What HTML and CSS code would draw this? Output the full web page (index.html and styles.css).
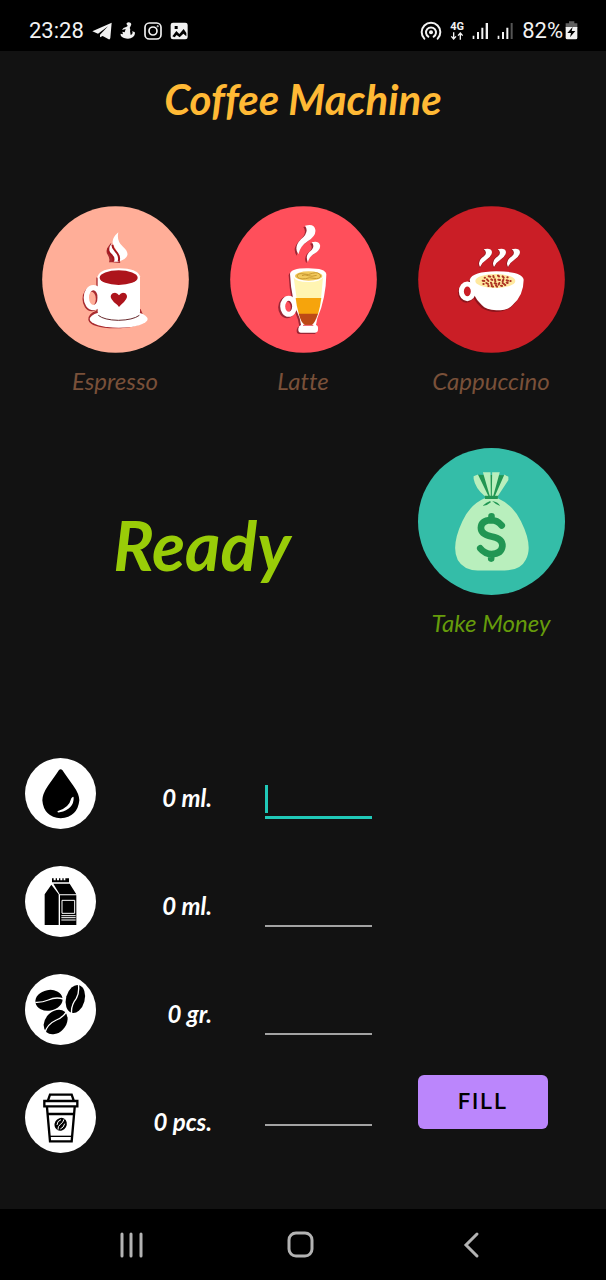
FILE: index.html
```html
<!DOCTYPE html>
<html lang="en">
<head>
<meta charset="utf-8">
<meta name="viewport" content="width=device-width, initial-scale=1">
<title>Coffee Machine</title>
<link rel="stylesheet" href="styles.css">
</head>
<body>
<header class="status-bar">
  <div class="status-group">
    <span class="status-text">23:28</span>
    <svg class="icon-telegram" viewBox="274 66 60 54" aria-hidden="true"><path fill="#f2f2f2" d="M333 68 275 94l17 7 30-22-24 25v8l8-4 18 10q4 1 5-4z"/></svg>
    <svg class="icon-figure" viewBox="360 66 48 54" aria-hidden="true"><path fill="#f2f2f2" d="M379 71q5-6 12-3 5 4 1 10l-3 6q3 4 1 9l2 12q5-1 6-7l-2-4 8 2q3 9-5 15-11 9-27 3-12-4-10-13l7 2-2-8 7 2 3-10-11 3q3-7 12-9 4-1 5-4z"/></svg>
    <svg class="icon-square" viewBox="435 65 54 54" fill="none" stroke="#f2f2f2" stroke-width="5" aria-hidden="true"><rect x="438" y="68" width="48" height="48" rx="13"/><circle cx="462" cy="92" r="12"/><circle cx="476" cy="78" r="1" stroke-width="4"/></svg>
    <svg class="icon-square" viewBox="514 65 54 54" aria-hidden="true"><rect x="516" y="67" width="51" height="50" rx="7" fill="#f2f2f2"/><path d="M528 77h9v9h-9zM521 108l12-16 9 9 13-15 8 12v10l-9-8-11 11-9-7-6 7z"/></svg>
  </div>
  <div class="status-group status-right">
    <svg class="icon-hotspot" viewBox="348 60 66 60" fill="none" stroke="#f2f2f2" stroke-width="6" stroke-linecap="round" aria-hidden="true"><circle cx="381" cy="94" r="6" fill="#f2f2f2" stroke="none"/><path d="M373 107a15 15 0 1 1 16 0M361 113a28 28 0 1 1 40 0"/></svg>
    <span class="network"><span>4G</span><svg viewBox="445 94 42 24" fill="none" stroke="#f2f2f2" stroke-width="4" aria-hidden="true"><path d="M456 95v19m-7-7 7 8 7-8M476 117V98m-7 7 7-8 7 8"/></svg></span>
    <svg class="icon-signal" viewBox="511 63 51 54" fill="#f2f2f2" aria-hidden="true"><path d="M513 104h5v10h-5zM526 93h6v21h-6zM539 80h6v34h-6zM552 66h7v48h-7z"/></svg>
    <svg class="icon-signal" viewBox="582 63 51 54" fill="#f2f2f2" aria-hidden="true"><path d="M584 104h5v10h-5zM597 93h6v21h-6zM610 80h6v34h-6z"/><path fill="#555" d="M623 66h6v48h-6z"/></svg>
    <span class="battery"><span class="status-text">82%</span>
    <svg viewBox="785 62 39 57" aria-hidden="true"><path fill="#5f5f5f" d="M797 63h16v6h9v14h-35V69h10z"/><path fill="#f2f2f2" d="M787 80h35v32q0 5-5 5h-25q-5 0-5-5z"/><path d="m808 80-16 18h11l-3 13 16-19h-11z"/></svg></span>
  </div>
</header>

<main class="machine">
  <h1 class="title">Coffee Machine</h1>

  <section class="drinks" aria-label="Drinks">
    <button class="tile" type="button">
      <svg class="disc" viewBox="36 33 441 441" aria-hidden="true">
        <circle cx="256.500" cy="253.500" r="220" fill="#ffae98"/>
        <ellipse cx="185" cy="312" rx="20" ry="29" fill="none" stroke="#a82b30" stroke-width="15"/>
        <path fill="#a82b30" d="M199 247v100q-25 8-24 28 7 24 81 25 65-1 91-22l-15-35zM243 144q-20 22-10 35 8 12 4 23h9l25 2-12-34z"/>
        <ellipse cx="190" cy="308" rx="21" ry="30" fill="none" stroke="#fff" stroke-width="16"/>
        <ellipse cx="266" cy="372" rx="87" ry="26" fill="#fff"/>
        <path fill="#fff" d="M203 244q8-24 64-24 55 0 63 24v107q-2 23-64 25-57-1-63-25z"/>
        <path d="M205 361q17 14 60 15 44-1 63-15" fill="none" stroke="#67282b" stroke-width="3"/>
        <ellipse cx="266" cy="248" rx="57" ry="22" fill="#ad141c"/>
        <path fill="#ad141c" d="M267 336q-5-7-15-14-18-18-4-27 11-6 19 6 8-12 19-6 12 9-4 26-9 8-15 15z"/>
        <path fill="#fff" d="M265 112q-22 19-16 36 7 13 15 27 4 10-1 25 26-6 29-19 3-12-13-26-20-17-14-43z"/>
        <path fill="#fff" d="M246 145q-15 16-5 28 12 13 8 27h14q9-15-3-28-14-13-14-27z"/>
        <path d="M247 149q0 10 10 20 14 14 9 30M236 160q-5 9 6 18 12 10 7 22" fill="none" stroke="#a4161d" stroke-width="6"/>
      </svg>
      <span class="caption">Espresso</span>
    </button>
    <button class="tile" type="button">
      <svg class="disc" viewBox="45 33 441 441" aria-hidden="true">
        <circle cx="265.500" cy="253.500" r="220" fill="#ff4f5b"/>
        <g fill="#9b2634" transform="translate(-5 4)"><path d="M270 92q28-8 31 12 3 18-23 35-22 14-28 39-15-22 8-45 26-22 12-41zM290 142q20-6 25 8 3 13-17 26-16 10-19 25-9-17 4-30 20-16 7-29z"/><path d="M226 237q2-18 56-17 50 0 52 18-1 73-27 132l-4 20q7 1 6 13 0 10-8 10h-43q-9 0-8-12 1-9 8-11l-4-20q-24-53-28-133z"/></g>
        <ellipse cx="216" cy="337" rx="19" ry="25" fill="none" stroke="#9b2634" stroke-width="15"/>
        <ellipse cx="221" cy="334" rx="18" ry="24" fill="none" stroke="#fff" stroke-width="15"/>
        <path fill="#fff" d="M270 92q28-8 31 12 3 18-23 35-22 14-28 39-15-22 8-45 26-22 12-41zM290 142q20-6 25 8 3 13-17 26-16 10-19 25-9-17 4-30 20-16 7-29z"/>
        <path fill="#fff" d="M225 237q2-18 56-17 51 0 53 18-1 73-27 132l-4 20q7 1 6 13 0 10-8 10h-43q-9 0-8-12 1-9 8-11l-4-20q-25-53-29-133z"/>
        <path fill="#fff5b2" d="M236 247q5 14 45 14 37 0 43-14l-6 64h-73z"/>
        <path fill="#f6a40c" d="M242 309h77q-3 25-10 49h-57q-8-26-10-49z"/>
        <path fill="#bd4916" d="M251 356h58q-8 25-18 34h-22q-12-10-18-34z"/>
        <path d="M264 391h31" stroke="#eb5260" stroke-width="3"/>
        <ellipse cx="281" cy="243" rx="41" ry="14" fill="#f2c95b"/>
        <path d="M246 243q2-10 21-6 14 4 25-2 20-6 25 8-3 10-20 7-15-4-25 1-23 3-26-8m15-1q8-5 19 0 10 4 25-1" fill="none" stroke="#c99932" stroke-width="3"/>
      </svg>
      <span class="caption">Latte</span>
    </button>
    <button class="tile" type="button">
      <svg class="disc" viewBox="52 33 441 441" aria-hidden="true">
        <circle cx="272.500" cy="253.500" r="220" fill="#ca1e26"/>
        <g fill="#8d151c" transform="translate(-3 5)"><path d="M207 254q8-24 80-25 78 0 82 25-1 51-38 80-43 24-85 0-33-27-39-80z"/></g>
        <ellipse cx="197" cy="293" rx="18" ry="23" fill="none" stroke="#8d151c" stroke-width="14"/>
        <ellipse cx="200" cy="289" rx="18" ry="22" fill="#ca1e26" stroke="#fff" stroke-width="15"/>
        <path fill="#fff" d="M207 254q8-24 80-25 78 0 82 25 0 47-34 77-12 15-48 15-32-2-43-15-31-28-37-77z"/>
        <ellipse cx="284" cy="258" rx="60" ry="21" fill="#ffe9a0"/>
        <path d="M252 248h1m11-4 5 1m9-2 1 4m13-5 3 2m11 0 3 4m11-1h1M246 257l5 1m8-5 4 5m9-5 3 2m8-2 1 6m9-5 5 1m10-1-2 5m12-3 4 1m7 1h1M248 267h1m8-3 5 3m9-4 2 5m9-3 5 1m9-2-2 5m12-5 4 3m8-4 3 1M263 273h1m9 0 4 2m9-4 3 4m12-3 3 1m9-3h1" stroke="#ad3424" stroke-width="6" stroke-linecap="round"/>
        <g id="steam"><path fill="#8d151c" d="M247 164q25-6 27 7 1 14-18 24-12 8-18 24-12-17 3-31 22-14 6-24z"/><path fill="#fff" d="M249 163q23-5 25 8 0 12-17 23-13 8-19 22-8-16 5-27 22-15 6-26z"/></g>
        <use href="#steam" x="42"/><use href="#steam" x="84"/>
      </svg>
      <span class="caption">Cappuccino</span>
    </button>
  </section>

  <section class="state">
    <p class="ready" role="status">Ready</p>
    <button class="tile money" type="button">
      <svg class="disc" viewBox="51 38 444 444" aria-hidden="true">
        <circle cx="273" cy="260" r="222" fill="#34bda8"/>
        <path fill="#219653" d="m230 119 89 1-27 66h-38z"/>
        <path fill="#b9efbd" d="M252 190h40q47 21 70 69 38 76 14 117-15 31-63 32h-82q-43-2-60-32-21-42 14-117 23-50 67-69z"/>
        <path fill="#b9efbd" d="m219 123 13-5 32 66h-11q-29-24-34-53zM247 111h23l1 73h-3zM275 111h23l-20 73h-4zM312 118l12 7v10l-32 49h-9z"/>
        <path fill="#219653" d="M253 182h39v10h-39zM269 198q-11 3-22 14 12 1 24-10zM275 198q9 9 24 15-5-12-24-15z"/>
        <path d="M304 272q-14-16-32-16-30 1-31 23 0 20 32 26 34 6 33 29-3 24-33 24-20 0-34-17M273 244v10M272 362v10" fill="none" stroke="#219653" stroke-width="20" stroke-linecap="round"/>
      </svg>
      <span class="caption">Take Money</span>
    </button>
  </section>

  <form class="supplies">
    <svg class="supply-icon" viewBox="29 35 213 213" aria-hidden="true"><circle cx="135.500" cy="141.500" r="106.500" fill="#fff"/><path d="M131 71q5-5 10 0 9 14 33 47 18 25 18 44-5 50-56 54-51-4-55-54 0-19 17-44 24-33 33-47z"/><path fill="#fff" d="M168 156q6-8 7-2 1 34-42 44-10 1-5-4 33-9 40-38z"/></svg>
    <label class="amount" for="water">0 ml.</label>
    <input class="field is-active" id="water" type="text" inputmode="numeric" autofocus>

    <svg class="supply-icon" viewBox="29 362 213 213" aria-hidden="true"><circle cx="135.500" cy="468.500" r="106.500" fill="#fff"/><path d="M110 399h5v6h6v-6h4v6h6v-6h4v6h6v-6h4v6h5v-6h11v12h-51zM114 415h49l20 32h-50zM108 418l22 29v92H88v-92zM134 450h49v89h-49z"/><path d="M140 465h38v39h-38zM138 511h43M138 517h43M138 524h43" fill="none" stroke="#fff" stroke-width="3"/></svg>
    <label class="amount" for="milk">0 ml.</label>
    <input class="field" id="milk" type="text" inputmode="numeric">

    <svg class="supply-icon" viewBox="29 27 213 213" aria-hidden="true"><circle cx="135.500" cy="133.500" r="106.500" fill="#fff"/><g><ellipse cx="101" cy="106" rx="41" ry="31" transform="rotate(-10 101 106)"/><ellipse cx="180" cy="102" rx="28" ry="43" transform="rotate(15 180 102)"/><ellipse cx="121" cy="171" rx="41" ry="31" transform="rotate(-48 121 171)"/></g><path d="M60 112q21 1 39-7 22-10 45-3M189 57q4 24-6 43-17 22-14 45M156 137q-12 20-33 28-28 13-34 38" fill="none" stroke="#fff" stroke-width="4"/></svg>
    <label class="amount" for="beans">0 gr.</label>
    <input class="field" id="beans" type="text" inputmode="numeric">

    <svg class="supply-icon" viewBox="29 351 213 213" fill="none" stroke="#000" aria-hidden="true"><circle cx="135.500" cy="457.500" r="106.500" fill="#fff" stroke="none"/><path stroke-width="7" d="m98 406 6-17h65l6 17M87 408h99v16H87zM95 427l9 102h65l9-102M97 447h79"/><path d="M104 514h66" stroke-width="4"/><ellipse cx="136" cy="478" rx="18" ry="20" transform="rotate(30 136 478)" fill="#000" stroke="none"/><path d="M146 463q-3 11-11 15-8 6-7 16M137 464q-12 4-12 16M148 476q-3 12-13 16" stroke="#fff" stroke-width="3"/></svg>
    <label class="amount" for="cups">0 pcs.</label>
    <input class="field field-last" id="cups" type="text" inputmode="numeric">
    <button class="fill" type="button">FILL</button>
  </form>
</main>

<nav class="nav-bar" aria-label="System">
  <button class="nav-button" type="button" aria-label="Recent apps"><svg viewBox="0 0 28 28"><path d="M5 3v22M14 3v22M24 3v22"/></svg></button>
  <button class="nav-button" type="button" aria-label="Home"><svg viewBox="0 0 28 28"><rect x="2" y="2" width="23" height="23" rx="7"/></svg></button>
  <button class="nav-button" type="button" aria-label="Back"><svg viewBox="0 0 28 28"><path d="M20 3 9 14l11 11"/></svg></button>
</nav>
</body>
</html>
```
FILE: styles.css
```css
* {
  box-sizing: border-box;
}

body {
  margin: 0;
  min-height: 100vh;
  display: flex;
  flex-direction: column;
  background: #121212;
  color: #fff;
  font-family: Lato, "Open Sans", sans-serif;
  font-variant-ligatures: none;
}

button {
  border: 0;
  padding: 0;
  background: none;
  font: inherit;
  cursor: pointer;
}

svg {
  display: block;
  flex: none;
}

.status-bar {
  display: flex;
  justify-content: space-between;
  align-items: center;
  height: 51px;
  padding: 10px 28px 0 29px;
  background: #000;
  color: #f2f2f2;
  font-family: Roboto, sans-serif;
}

.status-group {
  display: flex;
  align-items: center;
  gap: 8px;
}

.status-text {
  font-size: 22px;
  line-height: 24px;
}

.icon-telegram {
  width: 20px;
  height: 18px;
}

.icon-figure {
  width: 16px;
  height: 18px;
}

.icon-square {
  width: 18px;
  height: 18px;
}

.icon-hotspot {
  width: 22px;
  height: 20px;
}

.network {
  display: flex;
  flex-direction: column;
  align-items: center;
  font-size: 11px;
  font-weight: 700;
  line-height: 11px;
}

.network svg {
  width: 14px;
  height: 8px;
}

.icon-signal {
  width: 17px;
  height: 18px;
}

.battery {
  display: flex;
  align-items: center;
  gap: 2px;
}

.battery svg {
  width: 13px;
  height: 19px;
}

.machine {
  flex: 1;
  display: flex;
  flex-direction: column;
}

.title {
  margin: 20px 0 79px;
  color: #ffb935;
  font-size: 42px;
  font-style: italic;
  font-weight: 700;
  line-height: 56px;
  text-align: center;
}

.drinks,
.state {
  display: grid;
  grid-template-columns: repeat(3, 1fr);
  padding: 0 21px;
}

.tile {
  display: flex;
  flex-direction: column;
  align-items: center;
  gap: 10px;
  color: #795039;
}

.disc {
  width: 147px;
  height: 147px;
}

.caption {
  font-size: 24px;
  font-style: italic;
  line-height: 36px;
}

.state {
  align-items: center;
  margin-top: 49px;
}

.ready {
  grid-column: span 2;
  margin: 0;
  padding-right: 14px;
  color: #99cc08;
  font-size: 68px;
  font-style: italic;
  font-weight: 700;
  line-height: 80px;
  text-align: center;
}

.money {
  color: #669c0b;
}

.supplies {
  display: grid;
  grid-template-columns: 71px 1fr 107px 130px;
  grid-auto-rows: 71px;
  gap: 37px 46px;
  align-items: start;
  padding: 117px 58px 56px 25px;
}

.supply-icon {
  grid-column: 1;
  width: 71px;
  height: 71px;
}

.amount {
  padding: 24px 7px 0 0;
  font-size: 24px;
  font-style: italic;
  font-weight: 700;
  line-height: 32px;
  text-align: right;
  white-space: nowrap;
}

.field {
  width: 100%;
  height: 44px;
  margin: 17px 0 0;
  padding: 0 4px;
  border: 0;
  border-bottom: 2px solid #a3a3a3;
  border-radius: 0;
  outline: 0;
  background: none;
  color: #fff;
  font: 22px/28px Roboto, sans-serif;
}

.field.is-active {
  border-bottom: 3px solid #20c9b8;
  background: linear-gradient(#20c9b8, #20c9b8) 0 10px / 3px 28px no-repeat;
  caret-color: transparent;
}

.field-last {
  margin-top: 0;
}

.fill {
  height: 54px;
  margin-top: -7px;
  border-radius: 6px;
  background: #bb86fc;
  color: #000;
  font: 500 22px/28px Roboto, sans-serif;
  letter-spacing: 2px;
}

.nav-bar {
  display: grid;
  grid-template-columns: repeat(3, 170px);
  justify-content: center;
  align-items: center;
  height: 71px;
  padding: 1px 5px 0 0;
  background: #000;
}

.nav-button {
  display: flex;
  justify-content: center;
}

.nav-button svg {
  width: 28px;
  height: 28px;
  fill: none;
  stroke: #b3b3b3;
  stroke-width: 3;
  stroke-linecap: round;
}
```
